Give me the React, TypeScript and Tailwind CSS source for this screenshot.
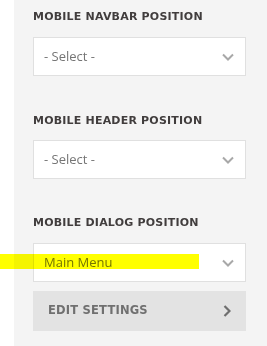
function ChevronDown() {
  return (
    <svg width="12" height="8" viewBox="0 0 12 8" fill="none" stroke="#a8a8a8" strokeWidth={2}>
      <path d="M1 1.5l5 5 5-5" />
    </svg>
  )
}

function ChevronRight() {
  return (
    <svg width="8" height="12" viewBox="0 0 8 12" fill="none" stroke="#6f6f6f" strokeWidth={2.2}>
      <path d="M1.5 1l5 5-5 5" />
    </svg>
  )
}

function Heading({ children, className }: { children: string; className?: string }) {
  return (
    <div
      className={"h-[14px] text-[11px] leading-[14px] font-bold text-[#413d3d] tracking-[0.2px] whitespace-nowrap " + (className ?? "")}
      style={{ fontFamily: '"DejaVu Sans", sans-serif' }}
    >
      {children}
    </div>
  )
}

function Select({ value, className }: { value: string; className?: string }) {
  return (
    <div
      className={"h-[39px] bg-white border border-[#e0e0e0] flex items-center justify-between pl-[10px] pr-[11px] " + (className ?? "")}
    >
      <span className="text-[13px] text-[#757575]" style={{ fontFamily: '"Open Sans", sans-serif' }}>
        {value}
      </span>
      <ChevronDown />
    </div>
  )
}

export default function App() {
  return (
    <div className="relative flex w-[267px] h-[346px] bg-white overflow-hidden">
      <div className="w-[14px] bg-white" />
      <div className="flex-1 bg-[#f4f4f4] pl-[19px] pr-[21px] pt-[10px]">
        <Heading>MOBILE NAVBAR POSITION</Heading>
        <Select value="- Select -" className="mt-[13px]" />

        <Heading className="mt-[38px]">MOBILE HEADER POSITION</Heading>
        <Select value="- Select -" className="mt-[12px]" />

        <Heading className="mt-[37px]">MOBILE DIALOG POSITION</Heading>
        <Select value="Main Menu" className="mt-[13px]" />

        <div className="mt-[9px] h-[40px] bg-[#e3e3e3] flex items-center justify-between pl-[15px] pr-[15px]">
          <span
            className="text-[11.5px] font-bold text-[#707070] tracking-[0.2px]"
            style={{ fontFamily: '"DejaVu Sans", sans-serif' }}
          >
            EDIT SETTINGS
          </span>
          <ChevronRight />
        </div>
      </div>

      {/* highlighter mark */}
      <div className="absolute left-0 top-[254px] w-[199px] h-[15px] bg-[#ffff00] mix-blend-multiply" />
    </div>
  )
}
